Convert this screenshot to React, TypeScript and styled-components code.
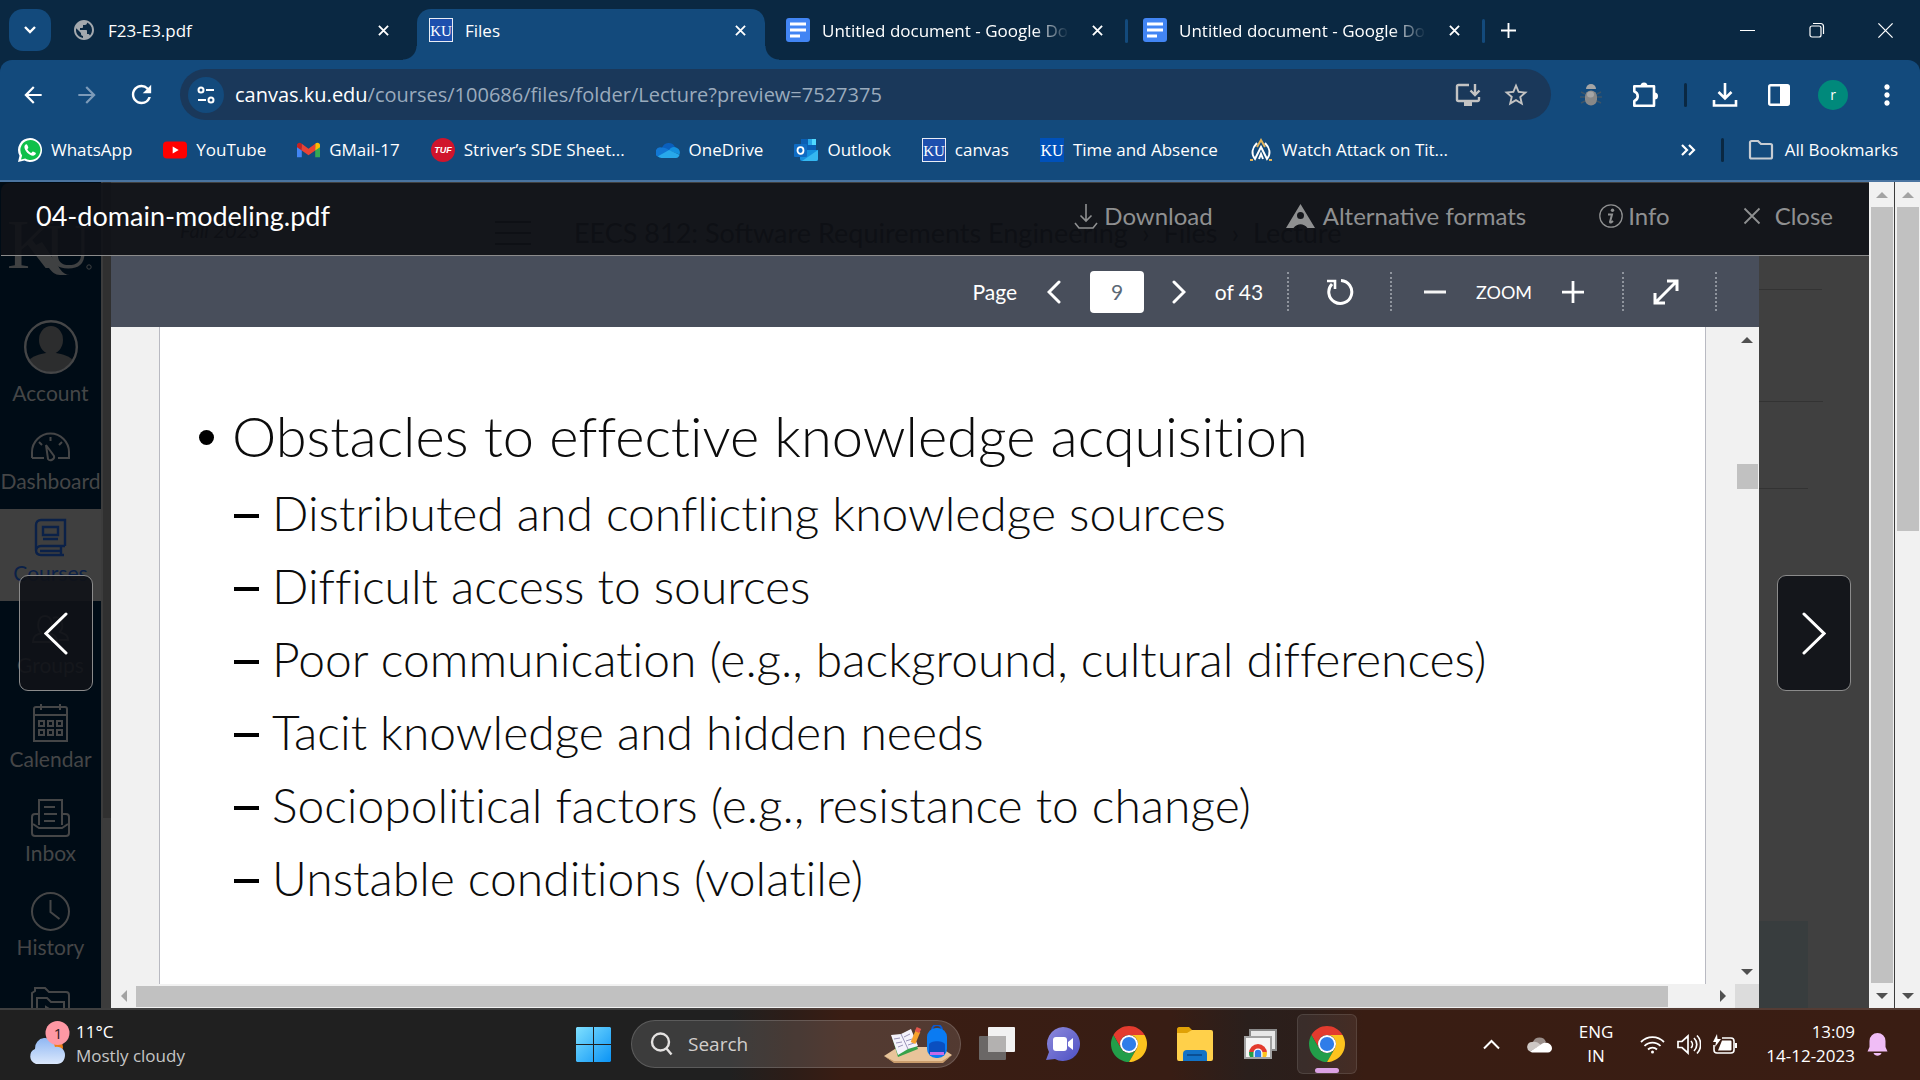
import React from "react";
import styled, { createGlobalStyle, css } from "styled-components";
import {
  MdArrowBack,
  MdArrowForward,
  MdMoreVert,
  MdPublic,
  MdRefresh,
  MdStarBorder,
} from "react-icons/md";

const ui = `"Segoe UI", "Open Sans", "Noto Sans", sans-serif`;
const lato = `Lato, "Noto Sans", sans-serif`;

const Global = createGlobalStyle`
  *, *::before, *::after { box-sizing: border-box; }
  body { margin: 0; background: #202020; }
  button, input { font: inherit; color: inherit; border: 0; padding: 0; margin: 0; background: none; }
  button { cursor: pointer; }
  svg { display: block; flex: none; }
  a { color: inherit; text-decoration: none; }
  ul { list-style: none; margin: 0; padding: 0; }
`;

const Desktop = styled.div`
  display: flex;
  flex-direction: column;
  height: 100vh;
  overflow: hidden;
  font-family: ${ui};
  font-size: 17px;
  color: #fff;
`;

/* ---------- browser frame ---------- */

const TabStrip = styled.header`
  display: flex;
  height: 60px;
  padding-left: 9px;
  background: #0a2842;
`;

const TabSearch = styled.button`
  display: grid;
  place-items: center;
  width: 42px;
  height: 42px;
  margin: 9px 9px 0 0;
  border-radius: 14px;
  background: #134a7c;
`;

const Tab = styled.div<{ $active?: boolean; $divided?: boolean }>`
  position: relative;
  display: flex;
  align-items: center;
  gap: 12px;
  width: 348px;
  height: 51px;
  margin: 9px 9px 0 0;
  padding: 0 14px 9px 12px;
  ${(p) =>
    p.$active &&
    css`
      background: #134a7c;
      border-radius: 14px 14px 0 0;
      &::before,
      &::after {
        content: "";
        position: absolute;
        bottom: 0;
        width: 14px;
        height: 14px;
      }
      &::before {
        right: 100%;
        background: radial-gradient(circle at 0 0, transparent 13px, #134a7c 14px);
      }
      &::after {
        left: 100%;
        background: radial-gradient(circle at 100% 0, transparent 13px, #134a7c 14px);
      }
    `}
  ${(p) =>
    p.$divided &&
    css`
      &::after {
        content: "";
        position: absolute;
        right: -6px;
        top: 10px;
        width: 3px;
        height: 24px;
        border-radius: 2px;
        background: #134a7c;
      }
    `}
`;

const TabTitle = styled.button<{ $fade?: boolean }>`
  flex: 1;
  min-width: 0;
  padding-top: 2px;
  overflow: hidden;
  text-align: left;
  white-space: nowrap;
  line-height: 24px;
  ${(p) => p.$fade && `mask-image: linear-gradient(90deg, #000 84%, transparent 98%);`}
`;

const TabClose = styled.button`
  display: grid;
  place-items: center;
  width: 22px;
  height: 22px;
`;

const NewTab = styled.button`
  display: grid;
  place-items: center;
  width: 40px;
  height: 60px;
`;

const WindowControls = styled.div`
  display: flex;
  margin-left: auto;
`;

const WindowButton = styled.button`
  display: grid;
  place-items: center;
  width: 69px;
  height: 60px;
`;

const Toolbar = styled.div`
  background: #0a2842;
`;

const ToolbarRow = styled.div`
  display: flex;
  align-items: center;
  height: 69px;
  padding: 0 6px;
  background: #134a7c;
  border-radius: 12px 12px 0 0;
`;

const ToolButton = styled.button<{ $w?: number; $color?: string }>`
  display: grid;
  place-items: center;
  width: ${(p) => p.$w ?? 54}px;
  height: 42px;
  color: ${(p) => p.$color ?? "#fff"};
`;

const AddressBar = styled.form`
  display: flex;
  flex: 1;
  align-items: center;
  height: 51px;
  margin: 0 12px;
  padding: 0 11px 0 8px;
  border-radius: 26px;
  background: #1a385a;
  font-size: 20px;
`;

const SiteInfo = styled.button`
  display: grid;
  place-items: center;
  width: 36px;
  height: 36px;
  margin-right: 11px;
  border-radius: 50%;
  background: #134a7c;
`;

const UrlInput = styled.input`
  flex: 1;
  min-width: 0;
  color: #9aabbd;
  outline: none;
`;

const Separator = styled.span`
  width: 3px;
  height: 24px;
  border-radius: 2px;
  background: #0a2842;
`;

const Avatar = styled.span`
  display: grid;
  place-items: center;
  width: 30px;
  height: 30px;
  border-radius: 50%;
  background: #00897b;
  font-size: 14px;
`;

const BookmarksBar = styled.nav`
  display: flex;
  align-items: center;
  gap: 31px;
  height: 53px;
  padding: 0 22px 9px 18px;
  border-bottom: 2px solid #4a74a0;
  background: #134a7c;
  white-space: nowrap;
`;

const Bookmark = styled.a<{ $end?: boolean }>`
  display: flex;
  align-items: center;
  gap: ${(p) => (p.$end ? 11 : 9)}px;
  line-height: 24px;
`;

const Overflow = styled.div`
  display: flex;
  align-items: center;
  gap: 24px;
  margin-left: auto;
`;

/* ---------- page ---------- */

const Page = styled.div`
  display: grid;
  grid-template-columns: minmax(0, 1fr) 25px 26px;
  flex: 1;
  min-height: 0;
`;

const Frame = styled.main`
  position: relative;
  display: flex;
  flex-direction: column;
  min-height: 0;
  padding-top: 1px;
  overflow: hidden;
  background: #404040;
  font-family: ${lato};
`;

const Backdrop = styled.div`
  position: absolute;
  inset: 0;
  display: flex;
  overflow: hidden;
`;

const GlobalNav = styled.nav`
  flex: none;
  width: 101px;
  background: #000c16;
  color: #454647;
  font-size: 21px;
  text-align: center;
`;

const Crest = styled.div`
  display: flex;
  justify-content: center;
  align-items: flex-start;
  height: 124px;
  padding-top: 26px;
  color: #3f4142;
`;

const NavLink = styled.a<{ $current?: boolean; $tall?: boolean }>`
  display: flex;
  flex-direction: column;
  align-items: center;
  gap: 3px;
  padding: 9px 0 ${(p) => (p.$tall ? 18 : 16)}px;
  line-height: 25px;
  background: ${(p) => (p.$current ? "#3f3f3f" : "transparent")};
  color: ${(p) => (p.$current ? "#0b2148" : "inherit")};
`;

const AccountLink = styled(NavLink)`
  gap: 6px;
  padding: 14px 0 12px;
`;

const NavIcon = styled.span`
  display: grid;
  place-items: center;
  height: 39px;
`;

const NavGutter = styled.div`
  flex: none;
  width: 10px;
  padding: 0 0 0 2px;
  background: #3c3c3c;
  &::before {
    content: "";
    display: block;
    height: 77%;
    background: #303030;
  }
`;

const Underlay = styled.div`
  display: flex;
  flex: 1;
  flex-direction: column;
  color: #000;
`;

const Crumbs = styled.div`
  display: flex;
  align-items: center;
  height: 108px;
  margin-right: 47px;
  padding: 0 0 6px 69px;
  border-bottom: 1px solid #333;
  font-size: 27px;
  white-space: nowrap;
`;

const Term = styled.i`
  width: 315px;
  padding-bottom: 6px;
  font-size: 20px;
`;

const Trail = styled.span`
  display: flex;
  gap: 14px;
  margin-left: 43px;
`;

const UnderRow = styled.div<{ $h: number; $right: number }>`
  height: ${(p) => p.$h}px;
  margin-right: ${(p) => p.$right}px;
  border-bottom: 1px solid #333;
`;

const UnderBox = styled.div`
  height: 87px;
  margin: auto 61px 0 0;
  background: #383d3e;
`;

const PreviewHeader = styled.header`
  position: relative;
  display: flex;
  align-items: center;
  height: 73px;
  margin-left: 1px;
  padding: 0 36px 6px 35px;
  border-bottom: 1px solid #8b8b8b;
  border-radius: 8px 0 0 0;
  background: rgba(15, 18, 23, 0.9);
  color: #8f9091;
  font-size: 24px;
  line-height: 32px;
`;

const FileName = styled.h1`
  margin: 0 auto 0 0;
  color: #fff;
  font-size: 27px;
  font-weight: 400;
`;

const HeaderActions = styled.div`
  display: flex;
  gap: 73px;
`;

const HeaderAction = styled.button<{ $gap?: number }>`
  display: flex;
  align-items: center;
  gap: ${(p) => p.$gap ?? 6}px;
`;

const PreviewBody = styled.div`
  position: relative;
  display: grid;
  grid-template-columns: 111px minmax(0, 1fr) 110px;
  flex: 1;
  min-height: 0;
`;

const Side = styled.div`
  display: grid;
  place-items: center;
  padding-top: 2px;
`;

const PagerButton = styled.button`
  display: grid;
  place-items: center;
  width: 74px;
  height: 116px;
  border: 1px solid #8b8b8b;
  border-radius: 9px;
  background: rgba(15, 18, 23, 0.9);
`;

const Viewer = styled.section`
  display: flex;
  flex-direction: column;
  min-height: 0;
`;

const ViewerBar = styled.div`
  display: flex;
  flex: none;
  align-items: center;
  justify-content: flex-end;
  height: 71px;
  padding-right: 7px;
  background: #484e5b;
  color: #fff;
  font-size: 21px;
`;

const PageField = styled.input`
  width: 54px;
  height: 42px;
  border-radius: 4px;
  background: #fff;
  color: #5c6976;
  text-align: center;
`;

const BarButton = styled.button<{ $w: number }>`
  display: grid;
  place-items: center;
  width: ${(p) => p.$w}px;
  height: 48px;
`;

const BarText = styled.span<{ $w: number }>`
  width: ${(p) => p.$w}px;
  text-align: center;
`;

const ZoomText = styled(BarText)`
  font-size: 18px;
`;

const BarRule = styled.span`
  height: 39px;
  border-left: 2px dotted #8f949d;
`;

const Scroller = styled.div`
  display: grid;
  grid-template-columns: minmax(0, 1fr) 24px;
  grid-template-rows: minmax(0, 1fr) 24px;
  flex: 1;
  min-height: 0;
  background: #f1f1f1;
`;

const Sheet = styled.article`
  margin: 0 29px 0 48px;
  padding: 73px 34px 0 36px;
  overflow: hidden;
  border: solid #b9bac2;
  border-width: 0 1px;
  background: #fff;
  color: #0c0c0c;
  font-variant-ligatures: none;
  font-weight: 300;
  white-space: nowrap;
`;

const Topic = styled.li`
  font-size: 56px;
  line-height: 72px;
  &::before {
    content: "";
    display: inline-block;
    width: 15px;
    height: 15px;
    margin: 0 18px 12px 3px;
    border-radius: 50%;
    background: #000;
    vertical-align: middle;
  }
`;

const Points = styled.ul`
  padding: 4px 0 0 38px;
`;

const Point = styled.li`
  display: flex;
  align-items: center;
  gap: 13px;
  height: 73px;
  font-size: 48px;
  &::before {
    content: "";
    width: 25px;
    height: 4px;
    margin-top: 6px;
    background: #000;
  }
`;

const Corner = styled.div`
  background: #dcdcdc;
`;

/* ---------- scroll bars ---------- */

const Rail = styled.div<{ $row?: boolean; $line?: boolean }>`
  display: flex;
  flex-direction: ${(p) => (p.$row ? "row" : "column")};
  min-width: 0;
  min-height: 0;
  background: #f1f1f1;
  border-left: ${(p) => (p.$line ? "1px solid #3c3c3c" : "0")};
`;

const RailArrow = styled.button<{ $row?: boolean; $dim?: boolean }>`
  display: grid;
  flex: none;
  place-items: center;
  width: ${(p) => (p.$row ? "25px" : "auto")};
  height: ${(p) => (p.$row ? "auto" : "25px")};
  color: ${(p) => (p.$dim ? "#a3a3a3" : "#505050")};
`;

const RailTrack = styled.div<{ $row?: boolean }>`
  display: flex;
  flex: 1;
  flex-direction: ${(p) => (p.$row ? "row" : "column")};
  min-height: 0;
  padding: ${(p) => (p.$row ? "2px 0 1px" : "0 1px 0 2px")};
`;

const RailPart = styled.div<{ $grow: number; $thumb?: boolean }>`
  flex: ${(p) => p.$grow} 0 0;
  background: ${(p) => (p.$thumb ? "#c1c1c1" : "transparent")};
`;

const triangles = {
  up: "M0 9 6 3l6 6z",
  down: "M0 3h12L6 9z",
  left: "M9 0v12L3 6z",
  right: "M3 0v12l6-6z",
};

const Triangle = ({ to }: { to: keyof typeof triangles }) => (
  <svg width="12" height="12" viewBox="0 0 12 12">
    <path fill="currentColor" d={triangles[to]} />
  </svg>
);

type ScrollbarProps = {
  before: number;
  thumb: number;
  after: number;
  row?: boolean;
  line?: boolean;
  atStart?: boolean;
};

const Scrollbar = ({ before, thumb, after, row, line, atStart }: ScrollbarProps) => (
  <Rail $row={row} $line={line}>
    <RailArrow $row={row} $dim={atStart} aria-label="Scroll back" tabIndex={-1}>
      <Triangle to={row ? "left" : "up"} />
    </RailArrow>
    <RailTrack $row={row}>
      <RailPart $grow={before} />
      <RailPart $grow={thumb} $thumb />
      <RailPart $grow={after} />
    </RailTrack>
    <RailArrow $row={row} aria-label="Scroll forward" tabIndex={-1}>
      <Triangle to={row ? "right" : "down"} />
    </RailArrow>
  </Rail>
);

/* ---------- taskbar ---------- */

const Taskbar = styled.footer`
  display: grid;
  flex: none;
  grid-template-columns: 1fr auto 1fr;
  align-items: center;
  height: 72px;
  padding-bottom: 2px;
  border-top: 2px solid rgba(255, 255, 255, 0.14);
  background: linear-gradient(
    90deg,
    #202020 0,
    #202020 38%,
    #2c1d18 41%,
    #3a1d13 44%,
    #381d14 61%,
    #2a1f1c 65%,
    #2c1e1a 68%,
    #391d13 71%,
    #3a1d13 100%
  );
  background-origin: border-box;
  font-size: 17px;
`;

const Weather = styled.button`
  display: flex;
  align-items: center;
  gap: 6px;
  justify-self: start;
  padding-left: 28px;
  line-height: 24px;
  text-align: left;
`;

const Muted = styled.span`
  color: #c6c6c6;
`;

const Stack = styled.span<{ $align?: string }>`
  display: flex;
  flex-direction: column;
  align-items: ${(p) => p.$align ?? "flex-start"};
  line-height: 24px;
`;

const Pinned = styled.div`
  display: flex;
  align-items: center;
  gap: 6px;
`;

const AppButton = styled.button<{ $active?: boolean }>`
  position: relative;
  display: grid;
  place-items: center;
  width: 60px;
  height: 60px;
  border-radius: 6px;
  ${(p) =>
    p.$active &&
    css`
      border: 1px solid rgba(255, 255, 255, 0.1);
      background: rgba(255, 255, 255, 0.07);
      &::after {
        content: "";
        position: absolute;
        bottom: 0;
        left: 50%;
        width: 24px;
        height: 5px;
        margin-left: -12px;
        border-radius: 3px;
        background: #dba2e4;
      }
    `}
`;

const SearchBox = styled.label`
  display: flex;
  align-items: center;
  gap: 15px;
  width: 330px;
  height: 48px;
  margin-left: 2px;
  padding: 0 8px 0 18px;
  border: 1px solid rgba(255, 255, 255, 0.16);
  border-radius: 24px;
  background: rgba(255, 255, 255, 0.13);
`;

const SearchInput = styled.input`
  flex: 1;
  min-width: 0;
  outline: none;
  font-size: 19px;
  &::placeholder {
    color: #d2cfcd;
    opacity: 1;
  }
`;

const Tray = styled.div`
  display: flex;
  align-items: center;
  justify-self: end;
  padding-right: 32px;
`;

const TrayButton = styled.button<{ $gap: number }>`
  display: flex;
  align-items: center;
  gap: 12px;
  margin-left: ${(p) => p.$gap}px;
`;

/* ---------- drawings ---------- */

const Cross = ({ size = 11, width = 2 }: { size?: number; width?: number }) => (
  <svg width={size} height={size} viewBox="0 0 12 12" fill="none" stroke="currentColor" strokeWidth={width}>
    <path d="m1 1 10 10M11 1 1 11" />
  </svg>
);

const Plus = ({ size = 15, width = 2 }: { size?: number; width?: number }) => (
  <svg width={size} height={size} viewBox="0 0 16 16" fill="none" stroke="currentColor" strokeWidth={width}>
    <path d="M8 0v16M0 8h16" />
  </svg>
);

const DocsIcon = () => (
  <svg width="24" height="24" viewBox="0 0 24 24">
    <rect width="24" height="24" rx="3" fill="#4285f4" />
    <path d="M4 6h16M4 12h16M4 18h10" stroke="#fff" strokeWidth="3" />
  </svg>
);

const KuIcon = ({ framed }: { framed?: boolean }) => (
  <svg width="24" height="24" viewBox="0 0 24 24">
    <rect width="24" height="24" fill={framed ? "#e9ecf4" : "#0051ba"} />
    {framed && <rect x="1" y="1" width="22" height="22" fill="#1d4fae" />}
    <text
      x="12"
      y="18"
      textAnchor="middle"
      fontFamily="Liberation Serif, serif"
      fontSize={framed ? 15 : 16}
      fill="#fff"
    >
      KU
    </text>
  </svg>
);

const WhatsAppIcon = () => (
  <svg width="24" height="24" viewBox="0 0 24 24">
    <path fill="#fff" d="M12 0a12 12 0 1 1-5.600 22.600L0 24l1.500-6.200A12 12 0 0 1 12 0z" />
    <path fill="#10c04a" d="M12.200 2a10 10 0 1 1-5 18.500L3 21.500l1.100-4A10 10 0 0 1 12.200 2z" />
    <path
      fill="#fff"
      d="M8.600 6.300c-.9-.3-2.200 1-2.200 2.700 0 3.500 5 9 8.900 8.700 1.500-.2 2.600-1.300 2.600-2.600 0-.4-2.800-1.800-3.200-1.600l-1.400 1.500c-1.600-.5-3.200-2-4-3.700l1-1.400c.2-.6-1-3.400-1.700-3.600z"
    />
  </svg>
);

const YouTubeIcon = () => (
  <svg width="24" height="24" viewBox="0 0 24 24">
    <rect y="3.500" width="24" height="17" rx="4" fill="#f00" />
    <path fill="#fff" d="m9.700 8.500 6 3.500-6 3.500z" />
  </svg>
);

const GmailIcon = () => (
  <svg width="23" height="24" viewBox="0 0 24 24">
    <path fill="#4285f4" d="M0 6v13.500h5V10z" />
    <path fill="#34a853" d="M24 6v13.500h-5V10z" />
    <path fill="#fbbc04" d="M19 5.500c2-2 5-1 5 1.500v2l-5 3.500z" />
    <path fill="#c5221f" d="M5 5.500C3 3.500 0 4.500 0 7v2l5 3.500z" />
    <path fill="#ea4335" d="m5 5.500 7 5.300 7-5.300v7L12 17.600 5 12.500z" />
  </svg>
);

const TufIcon = () => (
  <svg width="24" height="24" viewBox="0 0 24 24">
    <circle cx="12" cy="12" r="12" fill="#d0142c" />
    <text
      x="12"
      y="15"
      textAnchor="middle"
      fontFamily="Liberation Sans, sans-serif"
      fontSize="9"
      fontWeight="700"
      fontStyle="italic"
      fill="#fff"
    >
      TUF
    </text>
  </svg>
);

const OneDriveIcon = () => (
  <svg width="24" height="24" viewBox="0 0 24 24">
    <path fill="#0a5fbd" d="M6 10a7 7 0 0 1 13-1l-7 6z" />
    <path fill="#1277d4" d="M5.500 9.500c2-.3 4 .2 6 1.500l5 4-14 4A5 5 0 0 1 5.500 9.500z" />
    <path fill="#1490df" d="M13 12.500c1-3 5-4.500 8-2.500a5 5 0 0 1 2.500 6.500z" />
    <path fill="#28a8ea" d="m13 12 10.500 4.800A4 4 0 0 1 20 20H5.500c-1.500 0-2.700-.7-3.500-1.700z" />
  </svg>
);

const OutlookIcon = () => (
  <svg width="24" height="24" viewBox="0 0 24 24">
    <path fill="#0a5fb4" d="M7 1h15v12H7z" />
    <path fill="#28a8ea" d="M14 1h8v6h-8z" />
    <path fill="#50d9ff" d="M18 1h4v6h-4z" />
    <path fill="#1490df" d="M6 12h18v9a2 2 0 0 1-2 2H8a2 2 0 0 1-2-2z" />
    <path fill="#35b8f1" d="m24 12-16 11h14a2 2 0 0 0 2-2z" />
    <rect y="6" width="13" height="13" rx="1" fill="#0f6cc4" />
    <ellipse cx="6.500" cy="12.500" rx="3" ry="3.300" fill="none" stroke="#fff" strokeWidth="1.800" />
  </svg>
);

const WingIcon = () => (
  <svg width="24" height="24" viewBox="0 0 24 24" fill="none" strokeWidth="2">
    <path stroke="#e2b45c" d="M8 9l4-7 4 7" />
    <path stroke="#fff" d="M8 5c-5 5-6 11-2 16l6-12 6 12c4-5 3-11-2-16M10 21l2-5 2 5" />
    <path stroke="#e2b45c" d="M1 22h3M20 22h3" />
  </svg>
);

const TuneIcon = () => (
  <svg width="20" height="20" viewBox="0 0 20 20" fill="none" stroke="currentColor" strokeWidth="2">
    <circle cx="5" cy="5" r="2.500" />
    <path d="M10 5h8M2 15h8" />
    <circle cx="15" cy="15" r="2.500" />
  </svg>
);

const InstallIcon = () => (
  <svg width="28" height="26" viewBox="0 0 28 26" fill="none" stroke="currentColor" strokeWidth="2.400">
    <path d="M15 3H4.500A1.500 1.500 0 0 0 3 4.500v13A1.500 1.500 0 0 0 4.500 19h19a1.500 1.500 0 0 0 1.500-1.500V15M21 2v10M16.500 8.500 21 13l4.500-4.500" />
    <path d="M10 22h8" strokeWidth="4" />
  </svg>
);

const BugIcon = () => (
  <svg width="22" height="24" viewBox="0 0 22 24">
    <path
      d="M1 9l4 2M21 9l-4 2M0 14h5M22 14h-5M1 20l4-2M21 20l-4-2"
      stroke="#3c5468"
      strokeWidth="1.500"
    />
    <path fill="#a5a5a5" d="M6 6a5 5 0 0 1 10 0z" />
    <rect x="5" y="7.500" width="12" height="15" rx="6" fill="#888" />
    <rect x="7" y="8.500" width="7" height="6" rx="3" fill="#a5a5a5" />
  </svg>
);

const PuzzleIcon = () => (
  <svg width="26" height="28" viewBox="0 0 26 28">
    <path
      fill="none"
      stroke="currentColor"
      strokeWidth="2.600"
      strokeLinejoin="round"
      d="M2.300 5.300H22v19.400H2.300V20a5 5 0 0 0 0-9.500z"
    />
    <path fill="currentColor" d="M8.500 5a3.500 3.500 0 0 1 7 0zM22.500 11.500a3.500 3.500 0 0 1 0 7z" />
  </svg>
);

const DownloadIcon = () => (
  <svg width="26" height="26" viewBox="0 0 26 26" fill="none" stroke="currentColor" strokeWidth="2.600">
    <path d="M13 1v15M6.500 10l6.500 6.500 6.500-6.500M2 18v5.500h22V18" />
  </svg>
);

const SidePanelIcon = () => (
  <svg width="24" height="24" viewBox="0 0 24 24">
    <rect x="2.200" y="2.200" width="19.600" height="19.600" rx="1.500" fill="none" stroke="#fff" strokeWidth="2.400" />
    <path fill="#fff" d="M13 2h9v20h-9z" />
  </svg>
);

const FolderIcon = () => (
  <svg width="26" height="24" viewBox="0 0 26 24" fill="none" stroke="#c7ccd2" strokeWidth="2.200">
    <path d="M2 19V4.500C2 3.700 2.700 3 3.500 3H10l3 3h9.500c.8 0 1.500.7 1.500 1.500V19c0 .8-.7 1.500-1.500 1.500h-19A1.500 1.500 0 0 1 2 19z" />
  </svg>
);

const Chevron = ({ w, h, left, stroke }: { w: number; h: number; left?: boolean; stroke: number }) => (
  <svg
    width={w}
    height={h}
    viewBox={`0 0 ${w} ${h}`}
    fill="none"
    stroke="currentColor"
    strokeWidth={stroke}
    strokeLinecap="round"
  >
    <path d={left ? `M${w - 2} 2 2 ${h / 2}l${w - 4} ${h / 2 - 2}` : `M2 2l${w - 4} ${h / 2 - 2}L2 ${h - 2}`} />
  </svg>
);

const ChromeIcon = () => (
  <svg width="36" height="36" viewBox="2 2 44 44">
    <path fill="#e33b2e" d="M24 13H43.050A22 22 0 0 0 4.950 13L14.470 29.500A11 11 0 0 1 24 13z" />
    <path fill="#229e49" d="M14.470 29.500 4.950 13A22 22 0 0 0 24 46L33.530 29.500A11 11 0 0 1 14.470 29.500z" />
    <path fill="#fcc31e" d="M33.530 29.500 24 46A22 22 0 0 0 43.050 13H24A11 11 0 0 1 33.530 29.500z" />
    <circle cx="24" cy="24" r="11" fill="#fff" />
    <circle cx="24" cy="24" r="8.700" fill="#2f7de9" />
  </svg>
);

const WindowsIcon = () => (
  <svg width="35" height="35" viewBox="0 0 35 35">
    <defs>
      <linearGradient id="win" x1="0" y1="0" x2="1" y2="1">
        <stop offset="0" stopColor="#7fe0ff" />
        <stop offset="1" stopColor="#0a93f5" />
      </linearGradient>
    </defs>
    <path fill="url(#win)" d="M1 0h16v17H0V1zM18 0h16l1 1v16H18zM0 18h17v17H1l-1-1zM18 18h17v16l-1 1H18z" />
  </svg>
);

const StudyArt = () => (
  <svg width="68" height="38" viewBox="0 0 68 38">
    <path fill="#e8c49a" d="M0 31 14 22h42l12 8-10 7H10z" />
    <path fill="#c99c6c" d="M0 31l10 5h48l10-6-9 8H10z" />
    <path fill="#37a24a" d="m8 12 19-6 7 18-20 8z" />
    <path fill="#f4f2fb" d="m7 10 10-1 10-5 7 17-10 3-10 6z" />
    <path stroke="#9a94b8" strokeWidth="1" d="m10 14 6-1M12 18l6-1M14 22l5-2M20 12l6-3M22 16l6-2M24 20l6-2M17 9l7 15" />
    <path stroke="#f6a12c" strokeWidth="5" d="m29 18 5-12" />
    <path stroke="#e2574c" strokeWidth="5" d="m33 7 2-4" />
    <path fill="none" stroke="#0b59d0" strokeWidth="2" d="M48 5a5 5 0 0 1 10 0" />
    <rect x="43" y="3" width="20" height="30" rx="9" fill="#0a7bf2" />
    <path fill="#0a4fc0" d="M45 20c0-5 16-5 16 0v9H45z" />
    <path fill="#c56be8" d="M46 27h14v3H46z" />
  </svg>
);

const TaskViewIcon = () => (
  <svg width="36" height="36" viewBox="0 0 36 36">
    <rect x="0" y="10" width="27" height="24" rx="1" fill="#6a6766" />
    <rect x="9" y="1" width="27" height="25" rx="1" fill="#f2f2f2" />
    <path fill="#b3b1b0" d="M9 10h18v16H9z" />
  </svg>
);

const ChatIcon = () => (
  <svg width="36" height="36" viewBox="0 0 36 36">
    <defs>
      <linearGradient id="chat" x1="0" y1="0" x2="1" y2="1">
        <stop offset="0" stopColor="#8f8bdc" />
        <stop offset="1" stopColor="#4d50c4" />
      </linearGradient>
    </defs>
    <path fill="url(#chat)" d="M18 1a17 17 0 1 1-8 32l-9 1 3-8A17 17 0 0 1 18 1z" />
    <rect x="8" y="11" width="14" height="14" rx="3" fill="#fff" />
    <path fill="#fff" d="m23 16 5-4v12l-5-4z" />
  </svg>
);

const ExplorerIcon = () => (
  <svg width="36" height="34" viewBox="0 0 36 34">
    <path fill="#e0a106" d="M0 2C0 1 1 0 2 0h10l4 4v6H0z" />
    <path fill="#ffd04a" d="M0 6h10l5-3h19a2 2 0 0 1 2 2v27a2 2 0 0 1-2 2H2a2 2 0 0 1-2-2z" />
    <path fill="#1272c6" d="M6 34V27a4 4 0 0 1 4-4h16a4 4 0 0 1 4 4v7z" />
    <path stroke="#0a4f94" strokeWidth="2" d="M10 28h15" />
  </svg>
);

const RemoteIcon = () => (
  <svg width="34" height="30" viewBox="0 0 34 30">
    <path fill="#e8e8e8" stroke="#8a8a8a" strokeWidth="2" d="M6 1h26v20H6z" />
    <path fill="#f5f5f5" stroke="#a2a2a2" strokeWidth="2" d="M1 8h26v21H1z" />
    <path fill="#e33b2e" d="M5 24a9 9 0 0 1 18 0z" />
    <path fill="#229e49" d="M5 23a9 9 0 0 0 1 5h8V23z" />
    <path fill="#fcc31e" d="M14 23h9a9 9 0 0 1-1 5h-8z" />
    <path fill="#fff" d="M9.500 28V24a4.500 4.500 0 0 1 9 0v4z" />
    <path fill="#2f7de9" d="M10.800 28v-4a3.200 3.200 0 0 1 6.400 0v4z" />
  </svg>
);

const WeatherIcon = () => (
  <svg width="42" height="46" viewBox="0 0 42 46">
    <defs>
      <linearGradient id="cloud" x1="0" y1="0" x2="0" y2="1">
        <stop offset="0" stopColor="#8fb7f3" />
        <stop offset="1" stopColor="#dbe8fc" />
      </linearGradient>
    </defs>
    <circle cx="25" cy="26" r="10" fill="#f07e16" />
    <path fill="url(#cloud)" d="M8 43a8 8 0 0 1-1-15 10 10 0 0 1 20-2 8 8 0 0 1 10 8c0 5-3 9-8 9z" />
    <circle cx="29.500" cy="12" r="12" fill="#ff98a4" />
    <text x="30" y="18" textAnchor="middle" fontFamily="Open Sans, sans-serif" fontSize="15" fill="#26191b">
      1
    </text>
  </svg>
);

const navDraw = {
  width: 39,
  height: 39,
  viewBox: "0 0 39 39",
  fill: "none",
  stroke: "currentColor",
  strokeWidth: 2,
};

const DashboardIcon = () => (
  <svg {...navDraw}>
    <path d="M1 32V26a18.500 18.500 0 0 1 37 0v6H27M1 32h12M19.500 11v4M8 16l3 3M31 16l-3 3" />
    <path d="M15 19l8 11c1 3-4 6-6 3z" />
  </svg>
);

const CoursesIcon = () => (
  <svg {...navDraw} strokeWidth={2.4}>
    <path d="M34 28V2H10C7 2 5 4 5 7v25c0 3 2 5 5 5h23M34 28H10c-3 0-5 2-5 5M30 28v8M9 33h20" />
    <path d="M12 9h15v8H12zM12 21h15" />
  </svg>
);

const GroupsIcon = () => (
  <svg {...navDraw}>
    <path d="M2 32c0-7 4-7 8-9-5-6-3-17 4-17s9 11 4 17c4 2 8 2 8 9zM22 8c8-4 12 8 7 14 4 2 8 2 8 8h-9" />
  </svg>
);

const CalendarIcon = () => (
  <svg {...navDraw}>
    <path d="M3 5c0-1 1-2 2-2h29c1 0 2 1 2 2v32H3zM3 11h33M10 0v6M29 0v6" />
    <path d="M8 17h5v5H8zM17 17h5v5h-5zM26 17h5v5h-5zM8 26h5v5H8zM17 26h5v5h-5zM26 26h5v5h-5z" />
  </svg>
);

const InboxIcon = () => (
  <svg {...navDraw}>
    <path d="M8 27V2h23v25M8 16H4c-2 0-3 1-3 3v16c0 2 1 3 3 3h31c2 0 3-1 3-3V19c0-2-1-3-3-3h-4M2 26l6 4h23l6-4" />
    <path d="M13 9h11M13 16h13M13 23h11" />
  </svg>
);

const HistoryIcon = () => (
  <svg {...navDraw}>
    <circle cx="19.500" cy="19.500" r="18.500" />
    <path d="M19.500 8v12l9 7" />
  </svg>
);

const StudioIcon = () => (
  <svg {...navDraw}>
    <path d="M6 34H1V7l3-2V2h10l4 4h17c2 0 3 1 3 3v25h-5" />
    <path d="M6 36V12h10l4 4h13v20zM15 21v10l8-5z" />
  </svg>
);

const PersonIcon = () => (
  <svg width="54" height="54" viewBox="0 0 54 54">
    <clipPath id="person">
      <circle cx="27" cy="27" r="25" />
    </clipPath>
    <g clipPath="url(#person)" fill="#2c2d2e">
      <ellipse cx="27" cy="20" rx="12" ry="14" />
      <path d="M4 54V42c3-6 12-8 18-9h10c6 1 15 3 18 9v12z" />
    </g>
    <circle cx="27" cy="27" r="25.800" fill="none" stroke="#454647" strokeWidth="2.400" />
  </svg>
);

const KuCrest = () => (
  <svg width="90" height="80" viewBox="0 0 90 80">
    <text x="1" y="60" fontFamily="Liberation Serif, serif" fontSize="70" fill="currentColor">
      K
    </text>
    <text x="39" y="60" fontFamily="Liberation Serif, serif" fontSize="64" fill="currentColor">
      U
    </text>
    <path fill="currentColor" d="m28 38 8-4 18 27c3 4 6 6 10 6H54c-5 0-8-3-11-7z" />
    <circle cx="83" cy="59" r="2.200" fill="none" stroke="currentColor" />
  </svg>
);

/* ---------- content ---------- */

const tabs = [
  { title: "F23-E3.pdf", icon: <MdPublic size={24} color="#a4a9ae" /> },
  { title: "Files", icon: <KuIcon framed />, active: true },
  { title: "Untitled document - Google Docs", icon: <DocsIcon />, fade: true },
  { title: "Untitled document - Google Docs", icon: <DocsIcon />, fade: true },
];

const bookmarks = [
  { label: "WhatsApp", icon: <WhatsAppIcon /> },
  { label: "YouTube", icon: <YouTubeIcon /> },
  { label: "GMail-17", icon: <GmailIcon /> },
  { label: "Striver’s SDE Sheet...", icon: <TufIcon /> },
  { label: "OneDrive", icon: <OneDriveIcon /> },
  { label: "Outlook", icon: <OutlookIcon /> },
  { label: "canvas", icon: <KuIcon framed /> },
  { label: "Time and Absence", icon: <KuIcon /> },
  { label: "Watch Attack on Tit...", icon: <WingIcon /> },
];

const navItems = [
  { label: "Dashboard", icon: <DashboardIcon /> },
  { label: "Courses", icon: <CoursesIcon />, current: true },
  { label: "Groups", icon: <GroupsIcon />, tall: true },
  { label: "Calendar", icon: <CalendarIcon />, tall: true },
  { label: "Inbox", icon: <InboxIcon />, tall: true },
  { label: "History", icon: <HistoryIcon />, tall: true },
  { label: "Studio", icon: <StudioIcon />, tall: true },
];

const points = [
  "Distributed and conflicting knowledge sources",
  "Difficult access to sources",
  "Poor communication (e.g., background, cultural differences)",
  "Tacit knowledge and hidden needs",
  "Sociopolitical factors (e.g., resistance to change)",
  "Unstable conditions (volatile)",
];

const BrowserFrame = () => (
  <>
    <TabStrip>
      <TabSearch aria-label="Search tabs">
        <svg width="14" height="10" viewBox="0 0 14 10" fill="none" stroke="#fff" strokeWidth="2.400">
          <path d="m2 2 5 5 5-5" />
        </svg>
      </TabSearch>
      {tabs.map((tab, i) => (
        <Tab key={i} $active={tab.active} $divided={tab.fade}>
          {tab.icon}
          <TabTitle $fade={tab.fade}>{tab.title}</TabTitle>
          <TabClose aria-label="Close tab">
            <Cross />
          </TabClose>
        </Tab>
      ))}
      <NewTab aria-label="New tab">
        <Plus />
      </NewTab>
      <WindowControls>
        <WindowButton aria-label="Minimize">
          <svg width="15" height="15" viewBox="0 0 15 15">
            <path stroke="#fff" d="M0 7.500h15" />
          </svg>
        </WindowButton>
        <WindowButton aria-label="Restore">
          <svg width="16" height="16" viewBox="0 0 16 16" fill="none" stroke="#fff" strokeWidth="1.200">
            <rect x="1" y="4" width="11" height="11" rx="2" />
            <path d="M4 1.500h7.500a3 3 0 0 1 3 3V12" />
          </svg>
        </WindowButton>
        <WindowButton aria-label="Close window">
          <Cross size={17} width={0.9} />
        </WindowButton>
      </WindowControls>
    </TabStrip>
    <Toolbar>
      <ToolbarRow>
        <ToolButton aria-label="Back">
          <MdArrowBack size={26} />
        </ToolButton>
        <ToolButton aria-label="Forward" $color="#7d9bb9">
          <MdArrowForward size={26} />
        </ToolButton>
        <ToolButton aria-label="Reload">
          <MdRefresh size={29} />
        </ToolButton>
        <AddressBar onSubmit={(e) => e.preventDefault()}>
          <SiteInfo type="button" aria-label="Site information">
            <TuneIcon />
          </SiteInfo>
          <label htmlFor="url">canvas.ku.edu</label>
          <UrlInput id="url" defaultValue="/courses/100686/files/folder/Lecture?preview=7527375" />
          <ToolButton type="button" aria-label="Install" $w={48} $color="#c3c3c3">
            <InstallIcon />
          </ToolButton>
          <ToolButton type="button" aria-label="Bookmark" $w={48} $color="#c3c3c3">
            <MdStarBorder size={28} />
          </ToolButton>
        </AddressBar>
        <ToolButton aria-label="Debugger" $w={55}>
          <BugIcon />
        </ToolButton>
        <ToolButton aria-label="Extensions">
          <PuzzleIcon />
        </ToolButton>
        <ToolButton as="span" $w={26}>
          <Separator />
        </ToolButton>
        <ToolButton aria-label="Downloads">
          <DownloadIcon />
        </ToolButton>
        <ToolButton aria-label="Side panel">
          <SidePanelIcon />
        </ToolButton>
        <ToolButton aria-label="Profile">
          <Avatar>r</Avatar>
        </ToolButton>
        <ToolButton aria-label="Menu">
          <MdMoreVert size={32} />
        </ToolButton>
      </ToolbarRow>
      <BookmarksBar>
        {bookmarks.map((b) => (
          <Bookmark key={b.label} href="#">
            {b.icon}
            {b.label}
          </Bookmark>
        ))}
        <Overflow>
          <button aria-label="More bookmarks">
            <svg width="17" height="14" viewBox="0 0 17 14" fill="none" stroke="#fff" strokeWidth="2.200">
              <path d="m2 2 5 5-5 5M9 2l5 5-5 5" />
            </svg>
          </button>
          <Separator />
          <Bookmark href="#" $end>
            <FolderIcon />
            All Bookmarks
          </Bookmark>
        </Overflow>
      </BookmarksBar>
    </Toolbar>
  </>
);

const CanvasBackdrop = () => (
  <Backdrop>
    <GlobalNav>
      <Crest>
        <KuCrest />
      </Crest>
      <AccountLink href="#">
        <PersonIcon />
        Account
      </AccountLink>
      {navItems.map((item) => (
        <NavLink key={item.label} href="#" $current={item.current} $tall={item.tall}>
          <NavIcon>{item.icon}</NavIcon>
          {item.label}
        </NavLink>
      ))}
    </GlobalNav>
    <NavGutter />
    <Underlay>
      <Crumbs>
        <Term>Fall 2023</Term>
        <svg width="36" height="26" viewBox="0 0 36 26" stroke="#000" strokeWidth="2">
          <path d="M0 2h36M0 13h36M0 24h36" />
        </svg>
        <Trail>
          <span>EECS 812: Software Requirements Engineering</span>
          <span>›</span>
          <span>Files</span>
          <span>›</span>
          <span>Lecture</span>
        </Trail>
      </Crumbs>
      <UnderRow $h={112} $right={46} />
      <UnderRow $h={87} $right={61} />
      <UnderBox />
    </Underlay>
  </Backdrop>
);

const Preview = () => (
  <>
    <PreviewHeader>
      <FileName>04-domain-modeling.pdf</FileName>
      <HeaderActions>
        <HeaderAction>
          <svg width="24" height="26" viewBox="0 0 24 26" fill="none" stroke="currentColor" strokeWidth="1.600">
            <path d="M12 1v17M6.500 12.500 12 18l5.500-5.500M1 20l4 5h14l4-5" />
          </svg>
          Download
        </HeaderAction>
        <HeaderAction $gap={8}>
          <svg width="29" height="24" viewBox="0 0 29 24">
            <path
              fill="currentColor"
              fillRule="evenodd"
              d="M14.500 0 29 24h-7.500c-4-5-10-5-14 0H0zM14.500 8a3.500 3.500 0 1 0 0 7 3.500 3.500 0 0 0 0-7z"
            />
          </svg>
          Alternative formats
        </HeaderAction>
        <HeaderAction $gap={5}>
          <svg width="24" height="24" viewBox="0 0 24 24">
            <circle cx="12" cy="12" r="11.200" fill="none" stroke="currentColor" strokeWidth="1.300" />
            <circle cx="13.500" cy="6.300" r="1.700" fill="currentColor" />
            <path fill="none" stroke="currentColor" strokeWidth="2" d="M9 10.500h4l-2 7.500c0 1 1.500.5 3-1" />
          </svg>
          Info
        </HeaderAction>
        <HeaderAction $gap={14}>
          <Cross size={18} width={1.2} />
          Close
        </HeaderAction>
      </HeaderActions>
    </PreviewHeader>
    <PreviewBody>
      <Side>
        <PagerButton aria-label="Previous file">
          <Chevron w={24} h={43} left stroke={3} />
        </PagerButton>
      </Side>
      <Viewer>
        <ViewerBar>
          <label htmlFor="page">Page</label>
          <BarButton $w={73} aria-label="Previous page">
            <Chevron w={14} h={24} left stroke={3} />
          </BarButton>
          <PageField id="page" defaultValue="9" />
          <BarButton $w={70} aria-label="Next page">
            <Chevron w={14} h={24} stroke={3} />
          </BarButton>
          <BarText $w={50}>of 43</BarText>
          <BarButton as="span" $w={48}>
            <BarRule />
          </BarButton>
          <BarButton $w={56} aria-label="Rotate">
            <svg width="28" height="28" viewBox="0 0 28 28" fill="none" stroke="#fff" strokeWidth="3">
              <path d="M15 2.500A11.500 11.500 0 1 1 6 6" />
              <path d="M1 3h8v8" strokeWidth="2.600" />
            </svg>
          </BarButton>
          <BarButton as="span" $w={46}>
            <BarRule />
          </BarButton>
          <BarButton $w={42} aria-label="Zoom out">
            <svg width="22" height="22" viewBox="0 0 22 22">
              <path stroke="#f5f5f5" strokeWidth="3" d="M0 11h22" />
            </svg>
          </BarButton>
          <ZoomText $w={96}>ZOOM</ZoomText>
          <BarButton $w={42} aria-label="Zoom in">
            <Plus size={22} width={2} />
          </BarButton>
          <BarButton as="span" $w={58}>
            <BarRule />
          </BarButton>
          <BarButton $w={28} aria-label="Full screen">
            <svg width="26" height="26" viewBox="0 0 26 26" fill="none" stroke="#fff" strokeWidth="3">
              <path d="M2 24 24 2M14 2h10v10M2 14v10h10" />
            </svg>
          </BarButton>
          <BarButton as="span" $w={72}>
            <BarRule />
          </BarButton>
        </ViewerBar>
        <Scroller>
          <Sheet>
            <ul>
              <Topic>Obstacles to effective knowledge acquisition</Topic>
              <li>
                <Points>
                  {points.map((p) => (
                    <Point key={p}>{p}</Point>
                  ))}
                </Points>
              </li>
            </ul>
          </Sheet>
          <Scrollbar before={112} thumb={25} after={470} />
          <Scrollbar row atStart before={0} thumb={973} after={27} />
          <Corner />
        </Scroller>
      </Viewer>
      <Side>
        <PagerButton aria-label="Next file">
          <Chevron w={24} h={43} stroke={3} />
        </PagerButton>
      </Side>
    </PreviewBody>
  </>
);

const SystemTaskbar = () => (
  <Taskbar>
    <Weather>
      <WeatherIcon />
      <Stack>
        <span>11°C</span>
        <Muted>Mostly cloudy</Muted>
      </Stack>
    </Weather>
    <Pinned>
      <AppButton aria-label="Start">
        <WindowsIcon />
      </AppButton>
      <SearchBox>
        <svg width="23" height="24" viewBox="0 0 23 24" fill="none" stroke="#e4e2e1" strokeWidth="2.400">
          <circle cx="10.500" cy="10" r="8.500" />
          <path d="m16.500 16.500 5 6" />
        </svg>
        <SearchInput placeholder="Search" aria-label="Search" />
        <StudyArt />
      </SearchBox>
      <AppButton aria-label="Task view">
        <TaskViewIcon />
      </AppButton>
      <AppButton aria-label="Chat">
        <ChatIcon />
      </AppButton>
      <AppButton aria-label="Chrome">
        <ChromeIcon />
      </AppButton>
      <AppButton aria-label="File Explorer">
        <ExplorerIcon />
      </AppButton>
      <AppButton aria-label="Remote Desktop">
        <RemoteIcon />
      </AppButton>
      <AppButton aria-label="Chrome window" $active>
        <ChromeIcon />
      </AppButton>
    </Pinned>
    <Tray>
      <TrayButton $gap={0} aria-label="Hidden icons">
        <svg width="17" height="11" viewBox="0 0 17 11" fill="none" stroke="#fff" strokeWidth="2">
          <path d="m1 9.500 7.500-7.500 7.500 7.500" />
        </svg>
      </TrayButton>
      <TrayButton $gap={27} aria-label="OneDrive">
        <svg width="25" height="17" viewBox="0 0 25 17">
          <path fill="#9b8f8b" d="M6 6a7 7 0 0 1 13 0l-6 6z" />
          <path fill="#cdc7c4" d="M5 6c3-1 6 0 9 3l-11 6.500A5 5 0 0 1 5 6z" />
          <path fill="#fff" d="M3 15.500 14 8.500c3-3 11-2 11 4 0 2-2 4-4 4H5z" />
        </svg>
      </TrayButton>
      <TrayButton $gap={27} aria-label="Input language">
        <Stack $align="center">
          <span>ENG</span>
          <span>IN</span>
        </Stack>
      </TrayButton>
      <TrayButton $gap={27} aria-label="Network, sound and battery">
        <svg width="25" height="19" viewBox="0 0 25 19" fill="none" stroke="#fff" strokeWidth="1.800">
          <path d="M1 7a16 16 0 0 1 23 0M4.500 11a11 11 0 0 1 16 0M8 14.500a6.500 6.500 0 0 1 9 0" />
          <circle cx="12.500" cy="17" r="1.500" fill="#fff" stroke="none" />
        </svg>
        <svg width="24" height="21" viewBox="0 0 24 21" fill="none" stroke="#fff" strokeWidth="1.700">
          <path d="M1 7.500h4l6-5.500v17l-6-5.500H1zM14 7a5 5 0 0 1 0 7M17 4a9 9 0 0 1 0 13M20 1.500a13 13 0 0 1 0 18" />
        </svg>
        <svg width="25" height="21" viewBox="0 0 25 21" fill="none" stroke="#fff" strokeWidth="1.600">
          <path d="M9 4h9a3 3 0 0 1 3 3v9a3 3 0 0 1-3 3H4a3 3 0 0 1-3-3v-5" />
          <path fill="#fff" stroke="none" d="M9 6.500h8.500a1 1 0 0 1 1 1v8a1 1 0 0 1-1 1H5zM22 9h2v5h-2zM4 0 0 8h3l-1 5 6-8H4.500z" />
        </svg>
      </TrayButton>
      <TrayButton $gap={28} aria-label="Clock and notifications">
        <Stack $align="flex-end">
          <span>13:09</span>
          <span>14-12-2023</span>
        </Stack>
        <svg width="21" height="23" viewBox="0 0 21 23">
          <path fill="#f0bdf6" d="M10.500 0a8 8 0 0 1 8 8v6l2 4.500H.5l2-4.500V8a8 8 0 0 1 8-8zM6.500 20h8c-1 3.500-7 3.500-8 0z" />
        </svg>
      </TrayButton>
    </Tray>
  </Taskbar>
);

export default function App() {
  return (
    <Desktop>
      <Global />
      <BrowserFrame />
      <Page>
        <Frame>
          <CanvasBackdrop />
          <Preview />
        </Frame>
        <Scrollbar atStart before={0} thumb={1} after={0} />
        <Scrollbar line atStart before={0} thumb={418} after={582} />
      </Page>
      <SystemTaskbar />
    </Desktop>
  );
}
